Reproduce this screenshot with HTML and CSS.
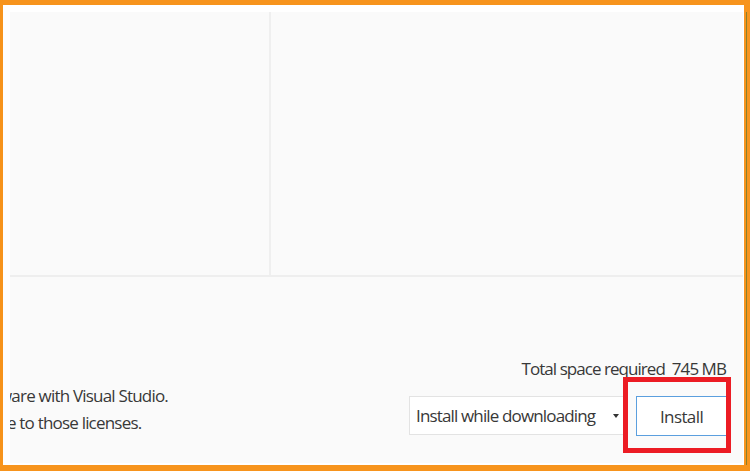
FILE: index.html
```html
<!DOCTYPE html>
<html lang="en">
<head>
<meta charset="utf-8">
<title>Install</title>
<link rel="stylesheet" href="styles.css">
</head>
<body>
<div class="frame">
  <div class="panel">
    <div class="top">
      <div class="pane-left"></div>
      <div class="pane-right"></div>
    </div>
    <div class="bottom">
      <div class="total">Total space required&nbsp; 745 MB</div>
      <div class="row">
        <div class="license">
          <p class="l1">ware with Visual Studio.</p>
          <p class="l2">e to those licenses.</p>
        </div>
        <div class="controls">
          <div class="select">
            <span class="select-text">Install while downloading</span>
            <span class="caret"></span>
          </div>
          <div class="btn-wrap">
            <button class="btn">Install</button>
          </div>
        </div>
      </div>
    </div>
  </div>
</div>
</body>
</html>
```

FILE: styles.css
```css
* { box-sizing: border-box; }
html, body { margin: 0; }
body {
  width: 750px;
  height: 471px;
  overflow: hidden;
  background: linear-gradient(#8c7f2a, #8c7f2a) no-repeat 746px 12px / 1px 453px, #f7941d;
  padding: 5px 6px 6px 3px;
  font-family: "Open Sans", "Noto Sans", sans-serif;
  color: #383838;
}
.frame {
  height: 460px;
  background: #fff;
  padding: 7px 1px 2px 7px;
  display: flex;
  flex-direction: column;
}
.panel {
  flex: 1;
  background: #fafafa;
  display: flex;
  flex-direction: column;
}
.top {
  height: 265px;
  display: grid;
  grid-template-columns: 259px 1fr;
  border-bottom: 2px solid #eeeeee;
}
.pane-right { border-left: 2px solid #efefef; }
.bottom {
  flex: 1;
  display: flex;
  flex-direction: column;
}
.total {
  margin-top: 81px;
  padding-right: 17px;
  text-align: right;
  font-size: 17px;
  line-height: 22px;
  letter-spacing: -0.95px;
}
.row {
  display: flex;
  align-items: flex-start;
  margin-top: 16px;
}
.license {
  flex: 1;
  overflow: hidden;
  margin-top: -14px;
  font-size: 17px;
  line-height: 27px;
  letter-spacing: -0.8px;
}
.license p { margin: 0; white-space: nowrap; }
.l1 { margin-left: -11px !important; }
.l2 { margin-left: -3px !important; }
.controls {
  display: flex;
  align-items: flex-start;
  padding-right: 16px;
  gap: 9px;
}
.select {
  width: 218px;
  height: 39px;
  background: #fff;
  border: 1px solid #e3e3e3;
  display: flex;
  align-items: center;
  padding-left: 6px;
  font-size: 17px;
  letter-spacing: -0.85px;
}
.select-text { flex: 1; }
.caret {
  width: 0;
  height: 0;
  border-left: 3px solid transparent;
  border-right: 3px solid transparent;
  border-top: 4px solid #333;
  margin-right: 7px;
}
.btn-wrap { position: relative; }
.btn-wrap::after {
  content: "";
  position: absolute;
  left: -13px;
  top: -19px;
  right: -4px;
  bottom: -17px;
  border: 5px solid #ec1c24;
}
.btn {
  display: block;
  width: 91px;
  height: 40px;
  background: #fff;
  border: 1px solid #5b9fde;
  font-family: inherit;
  font-size: 17px;
  letter-spacing: -0.6px;
  color: #383838;
  padding: 0;
}
```
